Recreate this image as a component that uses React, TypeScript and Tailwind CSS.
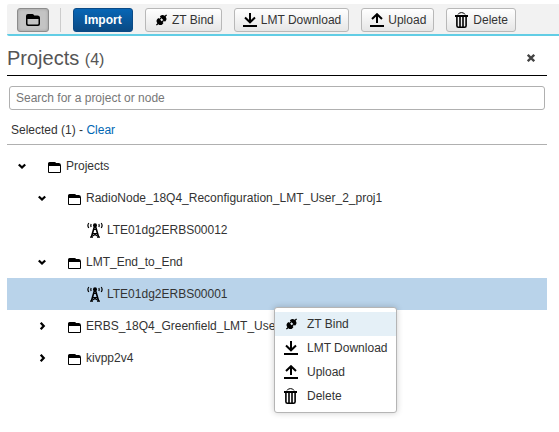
import React from "react";

type IconProps = { className?: string };

function FolderIcon({ className = "" }: IconProps) {
  return (
    <svg className={`shrink-0 ${className}`} width="13" height="11" viewBox="0 0 13 11" aria-hidden="true">
      <path
        fillRule="evenodd"
        d="M1.5 0H6.5Q7.5 0 8.2 1H11Q13 1 13 3.5V10Q13 11 12 11H1Q0 11 0 10V1.5Q0 0 1.5 0ZM1 4V10H12V4Z"
      />
    </svg>
  );
}

function ToolbarFolderIcon() {
  return (
    <svg className="shrink-0" width="14" height="12" viewBox="0 0 14 12" aria-hidden="true">
      <path
        fillRule="evenodd"
        d="M2 0H6.5Q7.7 0 8.3 1.5H11.5Q14 1.5 14 4V10Q14 12 12 12H2Q0 12 0 10V2Q0 0 2 0ZM1.5 5V9.5Q1.5 10.5 2.5 10.5H11.5Q12.5 10.5 12.5 9.5V5Z"
      />
    </svg>
  );
}

function PlugIcon({ className = "" }: IconProps) {
  return (
    <svg className={`shrink-0 ${className}`} width="14" height="14" viewBox="0 0 14 14" aria-hidden="true">
      <g transform="translate(7.5 7) rotate(45) scale(0.9)">
        <path d="M-0.7 -8H0.7V-5.8Q4 -5.2 4 -2.5V-1.4H-4V-2.5Q-4 -5.2 -0.7 -5.8Z" />
        <path d="M-2.7 -1.5H-1.3V1.5H-2.7ZM1.3 -1.5H2.7V1.5H1.3Z" />
        <path d="M-4 0.9H4V2.5Q4 5.2 0.7 5.8V8H-0.7V5.8Q-4 5.2 -4 2.5Z" />
      </g>
    </svg>
  );
}

function DownloadIcon({ className = "" }: IconProps) {
  return (
    <svg className={`shrink-0 ${className}`} width="14" height="14" viewBox="0 0 14 14" fill="none" stroke="black" strokeWidth="2" aria-hidden="true">
      <path d="M7 0V9M2 4.5L7 9.3L12 4.5M0 13H14" />
    </svg>
  );
}

function UploadIcon({ className = "" }: IconProps) {
  return (
    <svg className={`shrink-0 ${className}`} width="14" height="14" viewBox="0 0 14 14" fill="none" stroke="black" strokeWidth="2" aria-hidden="true">
      <path d="M7 10V1.5M2 6L7 1.2L12 6M0 13H14" />
    </svg>
  );
}

function TrashIcon({ className = "" }: IconProps) {
  return (
    <svg className={`shrink-0 ${className}`} width="14" height="16" viewBox="0 0 14 16" fill="none" stroke="black" aria-hidden="true">
      <path strokeWidth="1" d="M3 2.5Q3.8 0.6 6.5 0.6T10 2.5" />
      <path strokeWidth="2" d="M0 4H13" />
      <path strokeWidth="1.6" d="M1.9 4V13.7Q1.9 15.2 3.4 15.2H9.6Q11.1 15.2 11.1 13.7V4M5 5V15M8 5V15" />
    </svg>
  );
}

function AntennaIcon({ className = "" }: IconProps) {
  return (
    <svg className={`shrink-0 ${className}`} width="16" height="16" viewBox="0 0 16 16" fill="none" stroke="black" aria-hidden="true">
      <circle cx="8" cy="3.2" r="2" fill="black" stroke="none" />
      <path strokeWidth="1.6" d="M7.6 4L4.4 15M8.4 4L11.6 15" />
      <path strokeWidth="1.2" d="M6.4 7.5H9.6M5.5 11.5H10.5M3 15.2H6M10 15.2H13M5.5 14L10 11.5M10.5 14L6 11.5" />
      <path strokeWidth="1.2" d="M1.8 1Q0 3.5 1.8 6M14.2 1Q16 3.5 14.2 6M4.2 2Q3.4 3.5 4.2 5M11.8 2Q12.6 3.5 11.8 5" />
    </svg>
  );
}

function Chevron({ open }: { open: boolean }) {
  return (
    <svg width="8" height="8" viewBox="0 0 8 8" fill="none" stroke="black" strokeWidth="2.3" aria-hidden="true">
      <path d={open ? "M0.8 2.5L4 5.5L7.2 2.5" : "M2.7 0.8L5.7 4L2.7 7.2"} />
    </svg>
  );
}

const actions = [
  { label: "ZT Bind", Icon: PlugIcon },
  { label: "LMT Download", Icon: DownloadIcon },
  { label: "Upload", Icon: UploadIcon },
  { label: "Delete", Icon: TrashIcon },
];

function Toolbar() {
  return (
    <div className="flex h-8 items-center rounded-l-xs border-b-2 border-[#62cde5] bg-[#f2f2f2] pt-[2px] pl-[10px]">
      <button
        type="button"
        aria-label="Projects"
        aria-pressed="true"
        className="flex h-6 w-8 items-center justify-center rounded-[3px] border border-[#8c8c8c] bg-[#c4c4c4] shadow-[inset_0_0_3px_#999]"
      >
        <ToolbarFolderIcon />
      </button>
      <div className="ml-[11px] h-6 w-px bg-[#cccccc]" />
      <button
        type="button"
        className="ml-3 h-6 w-[60px] rounded-[3px] border border-[#0a4a86] bg-linear-to-b from-[#0766b6] to-[#0a4a84] font-bold text-white"
      >
        Import
      </button>
      <div className="ml-3 flex gap-3">
        {actions.map(({ label, Icon }) => (
          <button
            key={label}
            type="button"
            className="flex h-6 items-center gap-1 whitespace-nowrap rounded-[3px] border border-[#b8b8b8] bg-linear-to-b from-white to-[#e6e6e6] pr-[7px] pl-2"
          >
            <Icon />
            {label}
          </button>
        ))}
      </div>
    </div>
  );
}

type RowProps = {
  label: string;
  kind: "folder" | "node";
  open?: boolean;
  selected?: boolean;
  indent: string;
};

function TreeRow({ label, kind, open = false, selected = false, indent }: RowProps) {
  return (
    <li
      role="treeitem"
      aria-selected={selected}
      aria-expanded={kind === "folder" ? open : undefined}
      className={`flex h-8 items-center ${indent} ${selected ? "bg-[#b9d3ea]" : ""}`}
    >
      {kind === "folder" ? (
        <>
          <button type="button" aria-label={`Toggle ${label}`} className="mr-[22px]">
            <Chevron open={open} />
          </button>
          <FolderIcon className="mt-[3px] mr-[5px]" />
        </>
      ) : (
        <AntennaIcon className="mr-1" />
      )}
      <span>{label}</span>
    </li>
  );
}

const rows: RowProps[] = [
  { label: "Projects", kind: "folder", open: true, indent: "pl-[11px]" },
  { label: "RadioNode_18Q4_Reconfiguration_LMT_User_2_proj1", kind: "folder", open: true, indent: "pl-[31px]" },
  { label: "LTE01dg2ERBS00012", kind: "node", indent: "pl-20" },
  { label: "LMT_End_to_End", kind: "folder", open: true, indent: "pl-[31px]" },
  { label: "LTE01dg2ERBS00001", kind: "node", selected: true, indent: "pl-20" },
  { label: "ERBS_18Q4_Greenfield_LMT_Use", kind: "folder", indent: "pl-[31px]" },
  { label: "kivpp2v4", kind: "folder", indent: "pl-[31px]" },
];

function ContextMenu() {
  return (
    <div
      role="menu"
      className="absolute top-[157px] left-[267px] rounded-[3px] border border-[#b5b5b5] bg-white py-1 shadow-[0_0_6px_rgba(0,0,0,0.2)]"
    >
      {actions.map(({ label, Icon }, i) => (
        <button
          key={label}
          type="button"
          role="menuitem"
          className={`flex h-6 w-full items-center whitespace-nowrap px-[9px] ${i === 0 ? "bg-[#e5f0f7]" : ""}`}
        >
          <Icon className="mr-[9px]" />
          {label}
        </button>
      ))}
    </div>
  );
}

export default function App() {
  return (
    <div className="min-h-screen bg-white pt-1 pl-[7px] font-['Liberation_Sans',Arial,sans-serif] text-xs text-[#333333]">
      <Toolbar />
      <main className="mr-3">
        <header className="flex h-10 items-center justify-between border-b border-black pt-1 pr-3">
          <h1 className="text-xl text-[#555555]">
            Projects <span className="text-base">(4)</span>
          </h1>
          <button type="button" aria-label="Close">
            <svg width="8" height="8" viewBox="0 0 8 8" stroke="#444444" strokeWidth="2.3" aria-hidden="true">
              <path d="M0.8 0.8L7.2 7.2M7.2 0.8L0.8 7.2" />
            </svg>
          </button>
        </header>
        <div className="mt-[10px] px-[2px]">
          <input
            type="text"
            aria-label="Search for a project or node"
            placeholder="Search for a project or node"
            className="block h-6 w-full rounded-[3px] border border-[#b0b0b0] px-[6px] placeholder:text-[#777777]"
          />
        </div>
        <div className="mt-[11px] border-b border-[#b0b0b0] pb-[5px] pl-1 leading-[18px]">
          Selected (1) - <a href="#clear" className="text-[#0066b3]">Clear</a>
        </div>
        <div className="relative mt-[5px]">
          <ul role="tree">
            {rows.map((row) => (
              <TreeRow key={row.label} {...row} />
            ))}
          </ul>
          <ContextMenu />
        </div>
      </main>
    </div>
  );
}
